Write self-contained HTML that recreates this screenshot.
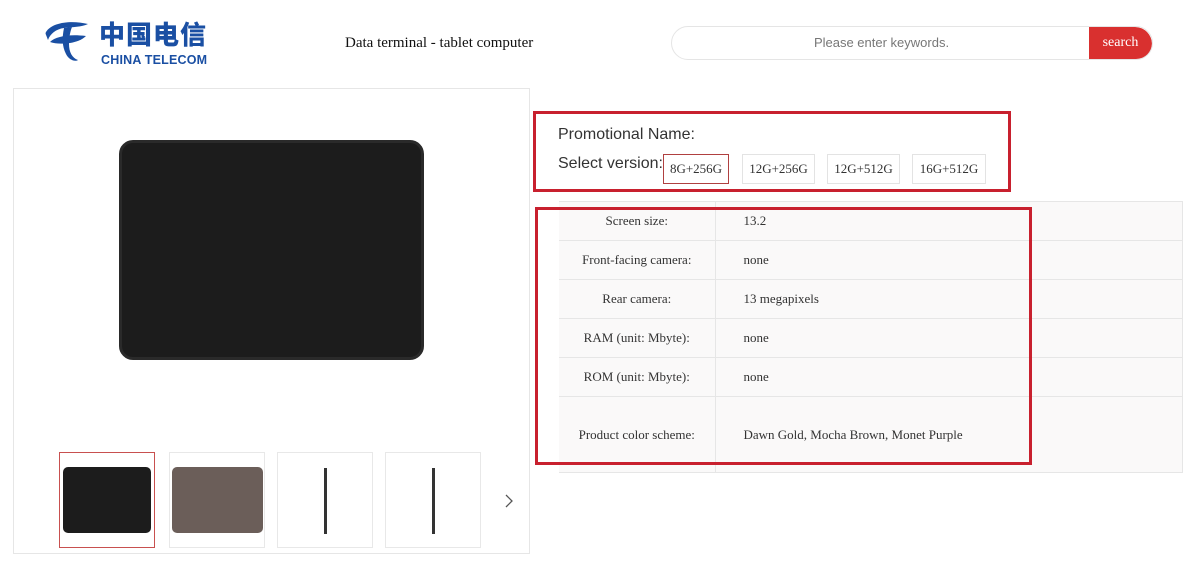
<!DOCTYPE html>
<html><head><meta charset="utf-8"><style>
*{margin:0;padding:0;box-sizing:border-box}
body{width:1200px;height:569px;background:#fff;position:relative;overflow:hidden;font-family:"Liberation Serif",serif;color:#333}
.a{position:absolute}
.logo-cn{font-family:"Liberation Sans","Noto Sans CJK SC",sans-serif;font-weight:900;color:#1a4fa3;font-size:26px;letter-spacing:1px;left:99px;top:18px;line-height:34px}
.logo-en{font-family:"Liberation Sans",sans-serif;font-weight:bold;color:#1a4fa3;font-size:12.5px;left:101px;top:53px;letter-spacing:0.2px}
.title{left:345px;top:35px;font-size:15px;color:#111}
.search{left:671px;top:26px;width:482px;height:34px;border:1px solid #e5e5e5;border-radius:17px;overflow:hidden}
.search .ph{position:absolute;left:0;width:419px;top:0;line-height:32px;text-align:center;font-family:"Liberation Sans",sans-serif;font-size:13px;color:#777}
.search .btn{position:absolute;right:0;top:0;width:63px;height:34px;background:#d9302f;color:#fff;line-height:32px;text-align:center;font-size:14px;border-radius:0 17px 17px 0}
.panel{left:13px;top:88px;width:517px;height:466px;border:1px solid #e6e6e6}
.tab{left:119px;top:140px;width:305px;height:220px;background:#1c1c1c;border-radius:14px;border:3px solid #2a2a2a}
.th{width:96px;height:96px;border:1px solid #e8e8e8;top:452px}
.red{border:3px solid #c8202e}
.sans{font-family:"Liberation Sans","DejaVu Sans",sans-serif}
.ver{top:154px;height:30px;border:1px solid #e3e3e3;font-size:13px;line-height:28px;text-align:center}
table{position:absolute;left:559px;top:201px;width:624px;border-collapse:collapse;background:#faf9f9;font-size:13px;color:#333}
td{border-top:1px solid #e6e6e6;height:39px}
td.k{width:156px;text-align:center;border-right:1px solid #e6e6e6}
td.v{padding-left:28px}
</style></head><body>
<svg class="a" style="left:42px;top:18px" width="52" height="48" viewBox="0 0 52 48">
<path d="M4 14 C10 4 30 2 46 6 C40 9 30 9 22 10 C14 11 8 16 6 22 C4 16 3 16 4 14Z" fill="#1a4fa3"/>
<path d="M22 10 C20 20 20 28 24 36 C27 42 33 44 36 42 C30 40 27 34 27 26 C27 20 28 14 30 9Z" fill="#1a4fa3"/>
<path d="M8 24 C14 18 28 16 44 18 C40 22 34 24 28 25 C20 26 14 26 8 24Z" fill="#1a4fa3"/>
</svg>
<div class="a logo-cn">中国电信</div>
<div class="a logo-en">CHINA TELECOM</div>
<div class="a title">Data terminal - tablet computer</div>
<div class="a search"><div class="ph">Please enter keywords.</div><div class="btn">search</div></div>

<div class="a panel"></div>
<div class="a tab"></div>
<div class="a th" style="left:59px;border-color:#c8504f"><div class="a" style="left:3px;top:14px;width:88px;height:66px;background:#1c1c1c;border-radius:5px"></div></div>
<div class="a th" style="left:169px"><div class="a" style="left:2px;top:14px;width:91px;height:66px;background:#6b5e59;border-radius:5px"></div></div>
<div class="a th" style="left:277px"><div class="a" style="left:46px;top:15px;width:3px;height:66px;background:#333"></div></div>
<div class="a th" style="left:385px"><div class="a" style="left:46px;top:15px;width:3px;height:66px;background:#333"></div></div>
<svg class="a" style="left:503px;top:493px" width="12" height="16" viewBox="0 0 12 16"><path d="M3 2 L9 8 L3 14" fill="none" stroke="#555" stroke-width="1.3"/></svg>

<table>
<tr><td class="k">Screen size:</td><td class="v">13.2</td></tr>
<tr><td class="k">Front-facing camera:</td><td class="v">none</td></tr>
<tr><td class="k">Rear camera:</td><td class="v">13 megapixels</td></tr>
<tr><td class="k">RAM (unit: Mbyte):</td><td class="v">none</td></tr>
<tr><td class="k">ROM (unit: Mbyte):</td><td class="v">none</td></tr>
<tr><td class="k" style="height:76px;border-bottom:1px solid #e6e6e6">Product color scheme:</td><td class="v" style="border-bottom:1px solid #e6e6e6">Dawn Gold, Mocha Brown, Monet Purple</td></tr>
</table>
<div class="a" style="left:1182px;top:201px;width:1px;height:272px;background:#e6e6e6"></div>

<div class="a red" style="left:533px;top:111px;width:478px;height:81px"></div>
<div class="a sans" style="left:558px;top:126px;font-size:16px;color:#333">Promotional Name:</div>
<div class="a sans" style="left:558px;top:155px;font-size:16px;color:#333">Select version:</div>
<div class="a ver" style="left:663px;width:66px;border-color:#b04040">8G+256G</div>
<div class="a ver" style="left:742px;width:73px">12G+256G</div>
<div class="a ver" style="left:827px;width:73px">12G+512G</div>
<div class="a ver" style="left:912px;width:74px">16G+512G</div>
<div class="a red" style="left:535px;top:207px;width:497px;height:258px"></div>
</body></html>
